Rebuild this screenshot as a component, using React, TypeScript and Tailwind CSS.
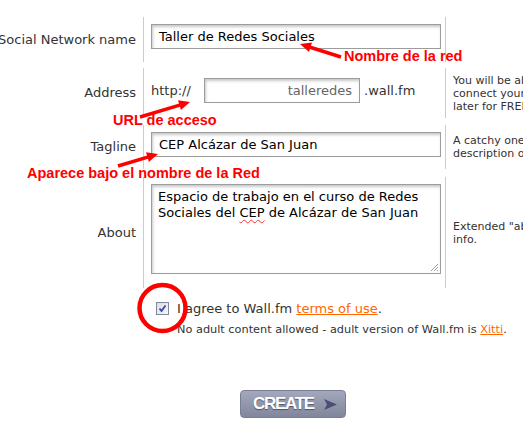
import React from "react";

// arrow geometry: tail -> tip, filled head
function Arrow({ x1, y1, x2, y2 }: { x1: number; y1: number; x2: number; y2: number }) {
  const dx = x2 - x1;
  const dy = y2 - y1;
  const len = Math.sqrt(dx * dx + dy * dy);
  const ux = dx / len;
  const uy = dy / len;
  const head = 11;
  const half = 5;
  const bx = x2 - ux * head;
  const by = y2 - uy * head;
  const pts = `${x2},${y2} ${bx - uy * half},${by + ux * half} ${bx + uy * half},${by - ux * half}`;
  return (
    <g>
      <line x1={x1} y1={y1} x2={bx + ux * 2} y2={by + uy * 2} stroke="#ff0000" strokeWidth={3.5} />
      <polygon points={pts} fill="#ff0000" />
    </g>
  );
}

const inputBox =
  "bg-white border border-[#9c9c9c] shadow-[inset_1px_2px_3px_rgba(0,0,0,0.22)] h-[25px] flex items-center";

interface Row {
  label: string;
  height: string;
  gap: string;
  help: string[];
}

const rows: Row[] = [
  { label: "Social Network name", height: "h-[45px]", gap: "mb-[6px]", help: [] },
  { label: "Address", height: "h-[50px]", gap: "mb-[7px]", help: ["You will be able to", "connect your domain", "later for FREE."] },
  { label: "Tagline", height: "h-[44px]", gap: "mb-[8px]", help: ["A catchy one line", "description of your network."] },
  { label: "About", height: "h-[111px]", gap: "", help: ['Extended "about"', "info."] },
];

function Field({ index }: { index: number }) {
  if (index === 0) {
    return (
      <div className="pt-[7px]">
        <div className={`${inputBox} w-[290px] pl-[7px] text-black`}>Taller de Redes Sociales</div>
      </div>
    );
  }
  if (index === 1) {
    return (
      <div className="pt-[10px] flex items-center">
        <span className="w-[53px]">http://</span>
        <div className={`${inputBox} w-[156px] justify-end pr-[7px] text-[#666]`}>talleredes</div>
        <span className="ml-[4px]">.wall.fm</span>
      </div>
    );
  }
  if (index === 2) {
    return (
      <div className="pt-[7px]">
        <div className={`${inputBox} w-[290px] pl-[7px] text-black`}>CEP Alcázar de San Juan</div>
      </div>
    );
  }
  return (
    <div className="pt-[7px]">
      <div className="relative bg-white border border-[#9c9c9c] shadow-[inset_1px_2px_3px_rgba(0,0,0,0.22)] h-[90px] w-[290px] pl-[6px] pt-[4px] leading-[16px] text-black">
        Espacio de trabajo en el curso de Redes
        <br />
        Sociales del{" "}
        <span className="underline decoration-wavy decoration-[#ff3030] decoration-1 underline-offset-2">CEP</span> de
        Alcázar de San Juan
        <svg className="absolute right-[1px] bottom-[1px]" width="10" height="10" viewBox="0 0 10 10">
          <line x1="9" y1="2" x2="2" y2="9" stroke="#9a9a9a" strokeWidth="1" />
          <line x1="9" y1="5" x2="5" y2="9" stroke="#9a9a9a" strokeWidth="1" />
          <line x1="9" y1="8" x2="8" y2="9" stroke="#9a9a9a" strokeWidth="1" />
        </svg>
      </div>
    </div>
  );
}

export default function App() {
  return (
    <div className="relative w-[523px] h-[432px] bg-white overflow-hidden font-['DejaVu_Sans',sans-serif] text-[13px] text-[#333]">
      <div className="pt-[17px]">
        {rows.map((row, i) => (
          <div key={row.label} className={`flex ${row.height} ${row.gap}`}>
            <div className="w-[143px] shrink-0 flex items-center justify-end pr-[7px] whitespace-nowrap">{row.label}</div>
            <div className="w-[302px] shrink-0 border-l border-[#cccccc] pl-[7px]">
              <Field index={i} />
            </div>
            <div className="w-[200px] shrink-0 border-l border-[#cccccc] pl-[7px] flex flex-col justify-center text-[11px] leading-[13px] whitespace-nowrap">
              {row.help.map((line) => (
                <div key={line}>{line}</div>
              ))}
            </div>
          </div>
        ))}
      </div>

      {/* terms */}
      <div className="flex pl-[156px] pt-[13px]">
        <div className="w-[13px] h-[13px] mt-[1px] border border-[#7f8a9e] bg-gradient-to-br from-[#dcdde2] to-[#f8f8fa] flex items-center justify-center">
          <svg width="9" height="9" viewBox="0 0 9 9">
            <path d="M1.5 4.5 L3.5 7 L7.5 1.5" fill="none" stroke="#3a4aa0" strokeWidth="1.8" />
          </svg>
        </div>
        <div className="ml-[8px]">
          <div className="leading-[15px]">
            I agree to Wall.fm <span className="text-[#ff6600] underline">terms of use</span>.
          </div>
          <div className="text-[11.3px] leading-[14px] mt-[7px]">
            No adult content allowed - adult version of Wall.fm is{" "}
            <span className="text-[#ff6600] underline">Xitti</span>.
          </div>
        </div>
      </div>

      <div className="pl-[240px] pt-[53px]">
        <div className="w-[106px] h-[28px] rounded-[4px] bg-gradient-to-b from-[#a4a8bc] to-[#82869c] border border-[#7a7e94] flex items-center pl-[12px]">
          <span className="font-['Liberation_Sans',sans-serif] font-bold text-[17px] tracking-[-1.3px] text-white [text-shadow:0_1px_1px_rgba(40,40,70,0.6)]">
            CREATE
          </span>
          <svg className="ml-[10px]" width="13" height="11" viewBox="0 0 13 11">
            <polygon points="0,0 13,5.5 0,11 3,5.5" fill="#4a5075" />
          </svg>
        </div>
      </div>

      {/* annotations */}
      <svg className="absolute inset-0 pointer-events-none" width="523" height="432">
        <Arrow x1={341} y1={57} x2={300} y2={44} />
        <Arrow x1={140} y1={117} x2={190} y2={102} />
        <Arrow x1={118} y1={166} x2={158} y2={154} />
        <circle cx={162.5} cy={308} r={23} fill="none" stroke="#ff0000" strokeWidth={4.5} />
      </svg>
      <div className="absolute left-[344px] top-[49px] font-['Liberation_Sans',sans-serif] font-bold text-[14.5px] leading-none text-[#ff0000] whitespace-nowrap">
        Nombre de la red
      </div>
      <div className="absolute left-[113px] top-[113px] font-['Liberation_Sans',sans-serif] font-bold text-[14.5px] leading-none text-[#ff0000] whitespace-nowrap">
        URL de acceso
      </div>
      <div className="absolute left-[27px] top-[166px] font-['Liberation_Sans',sans-serif] font-bold text-[14.5px] leading-none text-[#ff0000] whitespace-nowrap">
        Aparece bajo el nombre de la Red
      </div>
    </div>
  );
}
